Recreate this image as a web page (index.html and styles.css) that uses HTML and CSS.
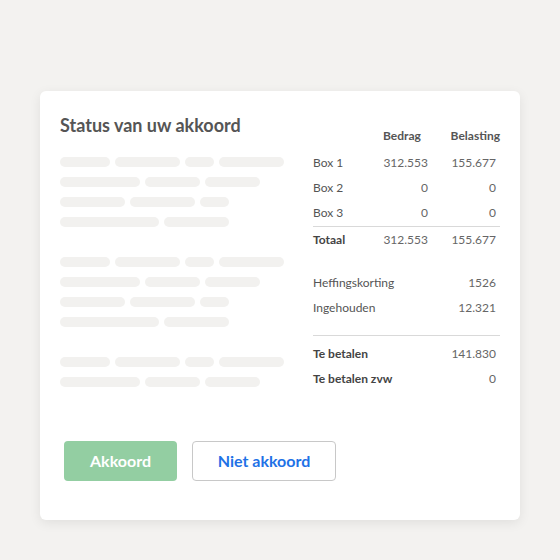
FILE: index.html
```html
<!DOCTYPE html>
<html lang="nl">
<head>
    <meta charset="UTF-8">
    <meta name="viewport" content="width=device-width, initial-scale=1.0">
    <title>Status van uw akkoord</title>
    <link rel="stylesheet" href="styles.css">
</head>
<body>
    <div class="card">
        <div class="card-body">
            <div class="intro">
                <h1>Status van uw akkoord</h1>

                <!-- placeholder tekst -->
                <div class="lines">
                    <div class="line"><span class="w50"></span><span class="w65"></span><span class="w29"></span><span class="w65"></span></div>
                    <div class="line"><span class="w80"></span><span class="w55"></span><span class="w55"></span></div>
                    <div class="line"><span class="w65"></span><span class="w65"></span><span class="w29"></span></div>
                    <div class="line"><span class="w99"></span><span class="w65"></span></div>
                </div>
                <div class="lines">
                    <div class="line"><span class="w50"></span><span class="w65"></span><span class="w29"></span><span class="w65"></span></div>
                    <div class="line"><span class="w80"></span><span class="w55"></span><span class="w55"></span></div>
                    <div class="line"><span class="w65"></span><span class="w65"></span><span class="w29"></span></div>
                    <div class="line"><span class="w99"></span><span class="w65"></span></div>
                </div>
                <div class="lines">
                    <div class="line"><span class="w50"></span><span class="w65"></span><span class="w29"></span><span class="w65"></span></div>
                    <div class="line"><span class="w80"></span><span class="w55"></span><span class="w55"></span></div>
                </div>
            </div>

            <div class="summary">
                <div class="row head">
                    <span></span>
                    <span class="col-left">Bedrag</span>
                    <span class="col-right">Belasting</span>
                </div>
                <div class="row">
                    <span>Box 1</span>
                    <span class="num">312.553</span>
                    <span class="num last">155.677</span>
                </div>
                <div class="row">
                    <span>Box 2</span>
                    <span class="num">0</span>
                    <span class="num last">0</span>
                </div>
                <div class="row">
                    <span>Box 3</span>
                    <span class="num">0</span>
                    <span class="num last">0</span>
                </div>
                <div class="row total">
                    <span class="label">Totaal</span>
                    <span class="num">312.553</span>
                    <span class="num last">155.677</span>
                </div>

                <div class="pairs">
                    <div class="pair">
                        <span>Heffingskorting</span>
                        <span class="num">1526</span>
                    </div>
                    <div class="pair">
                        <span>Ingehouden</span>
                        <span class="num">12.321</span>
                    </div>
                </div>

                <div class="pairs result">
                    <div class="pair">
                        <span class="label">Te betalen</span>
                        <span class="num">141.830</span>
                    </div>
                    <div class="pair">
                        <span class="label">Te betalen zvw</span>
                        <span class="num">0</span>
                    </div>
                </div>
            </div>
        </div>

        <div class="actions">
            <button class="btn btn-agree">Akkoord</button>
            <button class="btn btn-decline">Niet akkoord</button>
        </div>
    </div>
</body>
</html>
```

FILE: styles.css
```css
:root {
    --page-bg: #f3f2f0;
    --bar-color: #f2f1ef;
    --text-color: #555555;
    --line-color: #d9d9d9;
    --green: #93cea2;
    --blue: #1f72e6;
}
body {
    font-family: 'Lato', 'Liberation Sans', sans-serif;
    color: var(--text-color);
    background-color: var(--page-bg);
    margin: 0;
    padding: 91px 40px 40px;
}
.card {
    width: 480px;
    height: 429px;
    box-sizing: border-box;
    background-color: white;
    border-radius: 6px;
    box-shadow: 0 3px 12px rgba(0, 0, 0, 0.08);
    padding: 22px 20px 39px;
    display: flex;
    flex-direction: column;
}
.card-body {
    display: flex;
    justify-content: space-between;
    flex: 1;
}
.intro {
    width: 230px;
}
h1 {
    margin: 0 0 20px;
    font-size: 18px;
    line-height: 24px;
    font-weight: 700;
    color: #555555;
}
.lines {
    display: flex;
    flex-direction: column;
    gap: 10px;
    margin-bottom: 30px;
}
.line {
    display: flex;
    gap: 5px;
}
.line span {
    height: 10px;
    border-radius: 5px;
    background-color: var(--bar-color);
}
.w29 { width: 29px; }
.w50 { width: 50px; }
.w55 { width: 55px; }
.w65 { width: 65px; }
.w80 { width: 80px; }
.w99 { width: 99px; }

.summary {
    width: 187px;
    font-size: 12px;
}
.row {
    display: grid;
    grid-template-columns: 70px 45px 1fr;
    line-height: 25px;
}
.row.head {
    margin-top: 9px;
    line-height: 28px;
    font-weight: 700;
    color: #555555;
}
.col-right {
    text-align: right;
}
.num {
    text-align: right;
    color: #666666;
}
.num.last {
    padding-right: 4px;
}
.row.total {
    border-top: 1px solid var(--line-color);
    margin-top: 1px;
}
.label {
    font-weight: 700;
    color: #444444;
}
.pairs {
    margin-top: 18px;
}
.pair {
    display: flex;
    justify-content: space-between;
    line-height: 25px;
    padding-right: 4px;
}
.pairs.result {
    margin-top: 15px;
    border-top: 1px solid var(--line-color);
    padding-top: 5px;
}
.actions {
    display: flex;
    gap: 15px;
    padding-left: 4px;
}
.btn {
    height: 40px;
    border-radius: 4px;
    font-family: 'Lato', 'Liberation Sans', sans-serif;
    font-size: 16px;
    font-weight: 700;
    line-height: 20px;
    padding: 0 0 1px;
    cursor: pointer;
}
.btn-agree {
    width: 113px;
    border: none;
    background-color: var(--green);
    color: white;
}
.btn-decline {
    width: 144px;
    border: 1px solid #c8c8c8;
    background-color: white;
    color: var(--blue);
}
```
